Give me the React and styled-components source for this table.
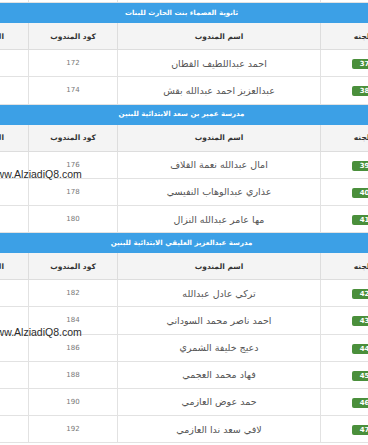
import React from 'react';
import styled, { createGlobalStyle } from 'styled-components';

const GlobalStyle = createGlobalStyle`
  html, body {
    margin: 0;
    padding: 0;
    background: #ffffff;
  }
  body {
    font-family: "DejaVu Sans", "Noto Sans", sans-serif;
  }
`;

const Viewport = styled.div`
  position: relative;
  width: 368px;
  height: 445px;
  overflow: hidden;
  background: #fff;
`;

const Table = styled.table`
  direction: rtl;
  width: 454px;
  margin-left: -46px;
  margin-top: -25px;
  border-collapse: collapse;
  table-layout: fixed;
`;

const TitleCell = styled.td`
  height: 19px;
  padding: 0;
  background: #3ca0e6;
  color: #fff;
  font-size: 7px;
  font-weight: bold;
  text-align: center;
  border: 1px solid #3ca0e6;
`;

const HeadCell = styled.th`
  height: 26px;
  padding: 0;
  background: #f4f4f4;
  color: #333;
  font-size: 7.5px;
  font-weight: bold;
  text-align: center;
  border: 1px solid #dddddd;
`;

const Cell = styled.td`
  height: 26.2px;
  padding: 0;
  color: ${(p) => (p.$num ? '#777' : '#555')};
  font-size: ${(p) => (p.$num ? '7px' : '9.5px')};
  text-align: center;
  border: 1px solid #e2e2e2;
`;

const Badge = styled.span`
  display: inline-block;
  min-width: 26px;
  padding: 1px 0;
  border-radius: 2px;
  background: #4a8f3b;
  color: #fff;
  font-size: 7px;
  font-weight: bold;
  line-height: 8px;
`;

const Watermark = styled.div`
  position: absolute;
  left: -11px;
  top: ${(p) => p.$top}px;
  font-family: "Liberation Sans", Arial, sans-serif;
  font-size: 10.5px;
  color: #2b2b2b;
  white-space: nowrap;
`;

const sections = [
  {
    title: 'ثانوية العصماء بنت الحارث للبنات',
    rows: [
      [37, 'احمد عبداللطيف القطان', 172],
      [38, 'عبدالعزيز احمد عبدالله بقش', 174],
    ],
  },
  {
    title: 'مدرسة عمير بن سعد الابتدائية للبنين',
    rows: [
      [39, 'امال عبدالله نعمة القلاف', 176],
      [40, 'عذاري عبدالوهاب النفيسي', 178],
      [41, 'مها عامر عبدالله النزال', 180],
    ],
  },
  {
    title: 'مدرسة عبدالعزيز العليقي الابتدائية للبنين',
    rows: [
      [42, 'تركي عادل عبدالله', 182],
      [43, 'احمد ناصر محمد السوداني', 184],
      [44, 'دعيج خليفة الشمري', 186],
      [45, 'فهاد محمد العجمي', 188],
      [46, 'حمد عوض العازمي', 190],
      [47, 'لافي سعد ندا العازمي', 192],
    ],
  },
];

function App() {
  return (
    <Viewport>
      <GlobalStyle />
      <Table>
        <colgroup>
          <col style={{ width: 88 }} />
          <col style={{ width: 203 }} />
          <col style={{ width: 89 }} />
          <col style={{ width: 74 }} />
        </colgroup>
        <tbody>
          <tr>
            <Cell />
            <Cell />
            <Cell />
            <Cell />
          </tr>
          {sections.map((s) => (
            <React.Fragment key={s.title}>
              <tr>
                <TitleCell colSpan={4}>{s.title}</TitleCell>
              </tr>
              <tr>
                <HeadCell>اللجنه</HeadCell>
                <HeadCell>اسم المندوب</HeadCell>
                <HeadCell>كود المندوب</HeadCell>
                <HeadCell>الهاتف</HeadCell>
              </tr>
              {s.rows.map(([no, name, code]) => (
                <tr key={no}>
                  <Cell>
                    <Badge>{no}</Badge>
                  </Cell>
                  <Cell>{name}</Cell>
                  <Cell $num>{code}</Cell>
                  <Cell />
                </tr>
              ))}
            </React.Fragment>
          ))}
        </tbody>
      </Table>
      <Watermark $top={168}>www.AlziadiQ8.com</Watermark>
      <Watermark $top={326}>www.AlziadiQ8.com</Watermark>
    </Viewport>
  );
}

export default App;
